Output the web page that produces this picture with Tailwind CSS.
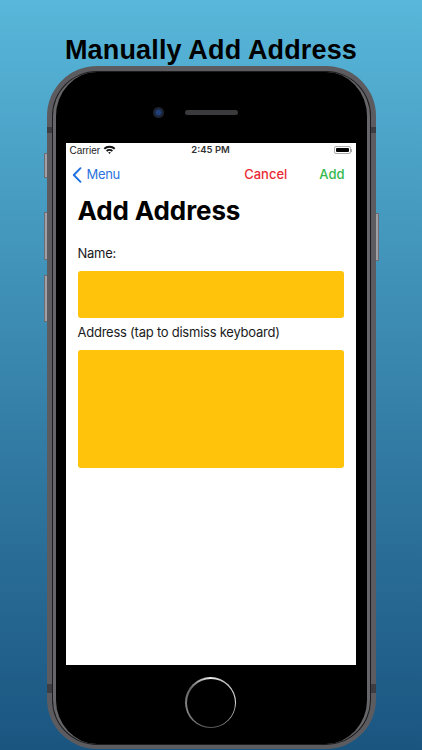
<!DOCTYPE html>
<html>
<head>
<meta charset="utf-8">
<script src="https://cdn.jsdelivr.net/npm/@tailwindcss/browser@4"></script>
</head>
<body class="m-0">
<div class="w-[422px] h-[750px] overflow-hidden flex flex-col items-center bg-gradient-to-b from-[#58b7da] to-[#1a5580] font-['Liberation_Sans',sans-serif]">
  <h1 class="h-[66px] pt-[35px] leading-[31px] text-[27px] font-bold text-black tracking-[0.15px] whitespace-nowrap">Manually Add Address</h1>
  <div class="relative shrink-0 w-[329px] h-[683px] rounded-[50px] bg-[#5c5c60] px-[6px] pt-[6px] pb-[5px]">
    <span class="absolute left-[-3px] top-[87px] w-[3px] h-[25px] rounded-l-[1px] border border-r-0 border-[#6c6c72] bg-[#a0a0a6]"></span>
    <span class="absolute left-[-3px] top-[146px] w-[3px] h-[48px] rounded-l-[1px] border border-r-0 border-[#6c6c72] bg-[#a0a0a6]"></span>
    <span class="absolute left-[-3px] top-[209px] w-[3px] h-[47px] rounded-l-[1px] border border-r-0 border-[#6c6c72] bg-[#a0a0a6]"></span>
    <span class="absolute right-[-3px] top-[147px] w-[3px] h-[48px] rounded-r-[1px] border border-l-0 border-[#6c6c72] bg-[#a0a0a6]"></span>
    <span class="absolute left-0 top-[61px] w-[5px] h-[6px] bg-[#3e3e42]"></span>
    <span class="absolute right-0 top-[61px] w-[5px] h-[6px] bg-[#3e3e42]"></span>
    <span class="absolute left-0 top-[618px] w-[5px] h-[9px] bg-[#3e3e42]"></span>
    <span class="absolute right-0 top-[618px] w-[5px] h-[9px] bg-[#3e3e42]"></span>
    <div class="relative h-full rounded-[44px] bg-black border-x-[3px] border-[#66666a] shadow-[0_0_0_1px_#1c1c1e] pl-[10px] pr-[11px] pt-[71px] flex flex-col">
      <span class="absolute left-[97px] top-[35px] w-[11px] h-[11px] rounded-full bg-[radial-gradient(circle,#20407a_25%,#1a1f2c_55%,#35363a_100%)]"></span>
      <span class="absolute left-[129px] top-[38px] w-[53px] h-[5px] rounded-full bg-[#3a3a3c]"></span>
      <div class="w-[290px] h-[522px] shrink-0 bg-white flex flex-col font-['Inter','Liberation_Sans',sans-serif]">
        <div class="h-[13px] pt-[1px] flex items-center justify-between pl-[4px] pr-[4px] text-[#222]">
          <div class="flex-1 flex items-center gap-[3px] font-['Liberation_Sans',sans-serif] text-[10px]">
            <span>Carrier</span>
            <svg width="13" height="9" viewBox="0 0 13 9" class="mb-[1px]"><path d="M0.6 3.1A8.4 8.4 0 0 1 12.4 3.1L11 4.6A6.4 6.4 0 0 0 2 4.6Z" fill="#111"/><path d="M3 5.4A5 5 0 0 1 10 5.4L8.7 6.7A3.2 3.2 0 0 0 4.3 6.7Z" fill="#111"/><path d="M5.2 7.5A1.9 1.9 0 0 1 7.8 7.5L6.5 8.9Z" fill="#111"/></svg>
          </div>
          <span class="font-['Inter',sans-serif] font-semibold text-[9.5px] text-[#333]">2:45 PM</span>
          <div class="flex-1 flex justify-end">
            <span class="flex items-center">
              <span class="w-[17px] h-[8px] rounded-[2px] border border-[#aaa] p-[1px] flex"><span class="flex-1 rounded-[1px] bg-black"></span></span>
              <span class="w-[1px] h-[3px] bg-[#aaa]"></span>
            </span>
          </div>
        </div>
        <div class="h-[38px] mb-[2px] pl-[6px] pr-[11px] flex items-center text-[13px]">
          <svg width="10" height="16" viewBox="0 0 10 16" class="mr-[5px]"><path d="M8.5 1.2L1.8 8L8.5 14.8" fill="none" stroke="#1f6fe0" stroke-width="1.9" stroke-linecap="round" stroke-linejoin="round"/></svg>
          <span class="text-[#2a73dc] tracking-[-0.3px]">Menu</span>
          <span class="ml-auto text-[#ea2a33] font-medium">Cancel</span>
          <span class="ml-[32px] text-[#34b84e] font-medium">Add</span>
        </div>
        <div class="px-[12px] flex flex-col">
          <h2 class="text-[26px] leading-[30px] font-bold text-black tracking-[-0.1px]">Add Address</h2>
          <p class="mt-[19px] text-[13px] leading-[16px] text-[#1a1a1a] tracking-[-0.24px]">Name:</p>
          <div class="mt-[10px] h-[47px] rounded-[3px] bg-[#ffc30b]"></div>
          <p class="mt-[6px] text-[13px] leading-[16px] text-[#1a1a1a] tracking-[-0.24px]">Address (tap to dismiss keyboard)</p>
          <div class="mt-[10px] h-[118px] rounded-[3px] bg-[#ffc30b]"></div>
        </div>
      </div>
      <div class="mt-[12px] mx-auto w-[51px] h-[51px] rounded-full shrink-0 bg-[conic-gradient(from_0deg,#eeeeee,#bbbbbb_10%,#dddddd_25%,#888888_40%,#555555_50%,#888888_70%,#666666_85%,#eeeeee)] p-[1.5px]">
        <div class="w-full h-full rounded-full bg-black"></div>
      </div>
    </div>
  </div>
</div>
</body>
</html>
